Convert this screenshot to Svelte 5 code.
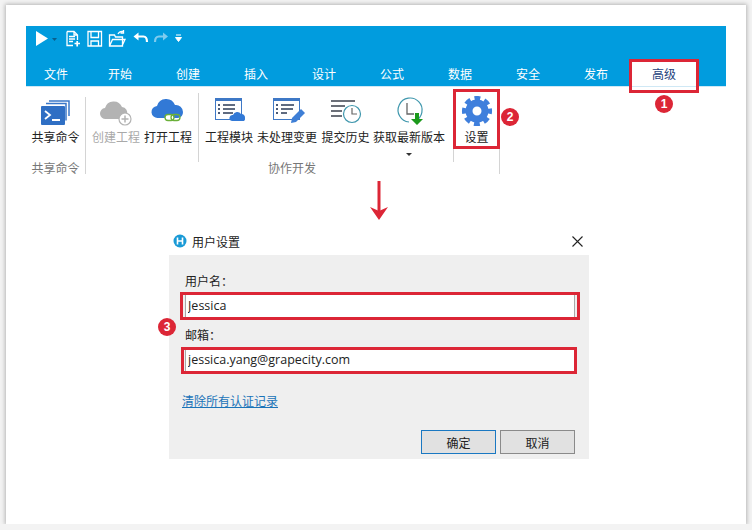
<script lang="ts">
	const tabs = ['文件', '开始', '创建', '插入', '设计', '公式', '数据', '安全', '发布', '高级'];
</script>

<div class="paper">
	<div class="ribbon">
		<div class="titlebar">
			<svg class="qa" width="150" height="20" viewBox="0 0 150 20" fill="none" stroke="#fff" stroke-width="1.300">
				<path d="M0 2 L12 9.500 L0 17Z" fill="#fff" stroke="none" />
				<path d="M16 9h5l-2.500 3z" fill="#0a5f8c" stroke="none" />
				<path d="M31 2.500h7l3.500 3.500v5M31 2.500v14h6M38 2.500v3.500h3.500" />
				<path d="M33 7.500h6M33 10h6M33 12.500h4" />
				<path d="M38.500 14.500h5.500M41.200 12v5.500" stroke-width="1.700" />
				<path d="M52 2.500h13.500v14.500h-13.500z" />
				<path d="M55 2.500v6h7.500v-6M55 17v-5h7.500v5" />
				<path d="M73.500 17v-11h5l1 2h7v9zM73.500 17l3-6.500h12.500l-3 6.500" />
				<path d="M82 5c1-2 3-3 5.500-2.500M87.500 1v3h-3" />
				<path d="M102.500 3.500l-5 4 5 4z" fill="#fff" stroke="none" />
				<path d="M101.500 7.500h6c2.500 0 3.500 2 3.500 5.500" stroke-width="2.200" />
				<path d="M127 3.500l5 4-5 4z" fill="#7fcbee" stroke="none" />
				<path d="M128 7.500h-5c-2.500 0-4 2-4 5.500" stroke="#7fcbee" stroke-width="2.200" />
				<path d="M140 6h5M139.500 8.500h6l-3 4z" fill="#fff" stroke="#fff" stroke-width="1" />
			</svg>
		</div>
		<div class="tabs">
			{#each tabs as t, i (t)}
				<div class="tab" class:first={i === 0} class:active={t === '高级'}>
					{t}
					{#if t === '高级'}<span class="mark"></span>{/if}
				</div>
			{/each}
		</div>
		<div class="body">
			<section class="group g1">
				<div class="items">
					<div class="cmd">
						<svg class="ic" width="36" height="30" viewBox="0 0 36 30">
							<path d="M12 5h20v15" fill="none" stroke="#3a78c9" stroke-width="1.500" />
							<path d="M9 7.500h20v17" fill="none" stroke="#3a78c9" stroke-width="1.500" />
							<rect x="4" y="10" width="24" height="19" rx="1" fill="#2f6fc4" />
							<path d="M8 15l5 4-5 4" fill="none" stroke="#fff" stroke-width="1.800" />
							<path d="M15 24h8" stroke="#fff" stroke-width="2" />
						</svg>
						<span>共享命令</span>
					</div>
				</div>
				<div class="glabel">共享命令</div>
			</section>
			<section class="group g2">
				<div class="items">
					<div class="cmd disabled w52">
						<svg class="ic" width="36" height="30" viewBox="0 0 36 30">
							<path d="M8 23a5.500 5.500 0 0 1-1-11 9 9 0 0 1 17-1 6 6 0 0 1 5 8 4 4 0 0 1-3 4z" fill="#b3b3b3" />
							<circle cx="27" cy="23" r="6" fill="#fff" stroke="#b3b3b3" stroke-width="1.200" />
							<path d="M23.500 23h7M27 19.500v7" stroke="#b3b3b3" stroke-width="1.500" />
						</svg>
						<span>创建工程</span>
					</div>
					<div class="cmd w52">
						<svg class="ic" width="36" height="30" viewBox="0 0 36 30">
							<path d="M8 22a6 6 0 0 1-1-12 9.500 9.500 0 0 1 18-1 7 7 0 0 1 8 7 6 6 0 0 1-5 6z" fill="#3279d6" />
							<rect x="15" y="18.500" width="9" height="6" rx="3" fill="#fff" stroke="#6bb03a" stroke-width="1.300" />
							<rect x="21" y="18.500" width="9" height="6" rx="3" fill="none" stroke="#6bb03a" stroke-width="1.300" />
						</svg>
						<span>打开工程</span>
					</div>
				</div>
			</section>
			<section class="group g3">
				<div class="items">
					<div class="cmd w52">
						<svg class="ic" width="36" height="30" viewBox="0 0 36 30">
							<rect x="4.500" y="2.500" width="26" height="21" fill="#fff" stroke="#3e78c6" />
							<rect x="4" y="2" width="27" height="3" fill="#3e78c6" />
							<path d="M7 9h2M7 13h2M7 17h2" stroke="#4a5a78" stroke-width="2" />
							<path d="M12 9h12M12 13h12M12 17h10" stroke="#5f6b80" stroke-width="2.200" />
							<path d="M21 25a3 3 0 0 1 1-6 4.500 4.500 0 0 1 8-1 3.500 3.500 0 0 1 4 4 3 3 0 0 1-1 3z" fill="#3279d6" />
						</svg>
						<span>工程模块</span>
					</div>
					<div class="cmd w64">
						<svg class="ic" width="36" height="30" viewBox="0 0 36 30">
							<rect x="4.500" y="2.500" width="26" height="21" fill="#fff" stroke="#3e78c6" />
							<rect x="4" y="2" width="27" height="3" fill="#3e78c6" />
							<path d="M7 9h2M7 13h2M7 17h2" stroke="#4a5a78" stroke-width="2" />
							<path d="M12 9h13M12 13h12M12 17h6" stroke="#5f6b80" stroke-width="2.200" />
							<path d="M22 27l1-5 9-9 4 4-9 9z" fill="#3e7fd6" />
						</svg>
						<span>未处理变更</span>
					</div>
					<div class="cmd w53">
						<svg class="ic" width="36" height="30" viewBox="0 0 36 30">
							<path d="M3 5h24M3 10h14M3 15h11M3 20h11" stroke="#6b6f78" stroke-width="2" />
							<circle cx="24" cy="18" r="8.500" fill="#fff" stroke="#3f97ad" stroke-width="1.200" />
							<path d="M24 12v6h5" fill="none" stroke="#666" stroke-width="1.200" />
						</svg>
						<span>提交历史</span>
					</div>
					<div class="cmd w74">
						<svg class="ic" width="36" height="30" viewBox="0 0 36 30">
							<path d="M24 25a12 12 0 1 0-6 1" fill="#fff" stroke="#3f97ad" stroke-width="1.200" />
							<path d="M16 7v11h7" fill="none" stroke="#666" stroke-width="1.300" />
							<path d="M24 17h4v6h4l-6 6-6-6h4z" fill="#1c9a1c" />
						</svg>
						<span>获取最新版本</span>
						<i class="caret"></i>
					</div>
				</div>
				<div class="glabel">协作开发</div>
			</section>
			<section class="group g4">
				<div class="items">
					<div class="cmd">
						<svg class="ic" width="36" height="30" viewBox="0 0 36 30">
							<circle cx="18" cy="15" r="8" fill="none" stroke="#3f7fdc" stroke-width="7" />
							<circle cx="18" cy="15" r="12.800" fill="none" stroke="#3f7fdc" stroke-width="4.500" stroke-dasharray="5.800 4.250" stroke-dashoffset="2.900" />
						</svg>
						<span>设置</span>
					</div>
				</div>
				<span class="mark"></span>
			</section>
		</div>
	</div>

	<div class="arrow">
		<svg width="20" height="40" viewBox="0 0 20 40">
			<path d="M10 0v34" stroke="#dc2636" stroke-width="3" />
			<path d="M1 26l9 13 9-13-9 4z" fill="#dc2636" />
		</svg>
	</div>

	<div class="dialog">
		<div class="dhead">
			<svg width="14" height="14" viewBox="0 0 14 14">
				<circle cx="7" cy="7" r="6.500" fill="#1a9ad6" />
				<path d="M4.500 3.500v7M9.500 3.500v7M4.500 7h5" stroke="#fff" stroke-width="1.600" />
			</svg>
			<span class="dtitle">用户设置</span>
			<svg class="close" width="11" height="11" viewBox="0 0 11 11">
				<path d="M.5.500l10 10M10.500.500l-10 10" stroke="#222" stroke-width="1.100" />
			</svg>
		</div>
		<div class="dbody">
			<label class="lbl" for="uname">用户名：</label>
			<div class="field">
				<input id="uname" value="Jessica" readonly />
				<span class="mark m1"></span>
			</div>
			<label class="lbl l2" for="umail">邮箱：</label>
			<div class="field f2">
				<input id="umail" value="jessica.yang@grapecity.com" readonly />
				<span class="mark m2"></span>
			</div>
			<a class="link" href="#top">清除所有认证记录</a>
			<div class="btns">
				<button class="primary">确定</button>
				<button>取消</button>
			</div>
		</div>
	</div>

	<span class="badge b1">1</span>
	<span class="badge b2">2</span>
	<span class="badge b3">3</span>
</div>

<style>
	:global(body) {
		background: #f3f3f3;
		font-family: "Noto Sans CJK SC", "Noto Sans", sans-serif;
		font-size: 12px;
		color: #333;
	}
	.paper {
		position: relative;
		box-sizing: border-box;
		width: 740px;
		height: 519px;
		margin: 5px 0 0 6px;
		padding: 21px 20px 0;
		background: #fff;
		box-shadow: 0 0 4px 1px rgba(0, 0, 0, 0.25);
	}
	.ribbon {
		width: 700px;
	}
	.titlebar {
		height: 36px;
		background: #019cde;
		padding: 3px 0 0 10px;
		box-sizing: border-box;
	}
	.qa {
		display: block;
	}
	.tabs {
		display: flex;
		height: 24px;
		background: #019cde;
		border-bottom: 1px solid #cfe8f5;
	}
	.tab {
		position: relative;
		width: 68px;
		text-align: center;
		line-height: 24px;
		color: #fff;
	}
	.tab.first {
		width: 60px;
	}
	.tab.active {
		background: #fff;
		color: #24417c;
	}
	.mark {
		position: absolute;
		border: 3px solid #dc2636;
		box-sizing: border-box;
		pointer-events: none;
	}
	.tab .mark {
		inset: -3px -1px -7px -1px;
	}
	.body {
		display: flex;
		height: 88px;
	}
	.group {
		position: relative;
		display: flex;
		flex-direction: column;
		border-right: 1px solid #d4d4d4;
		box-sizing: border-box;
	}
	.g1 {
		width: 60px;
		height: 77px;
		margin-top: 10px;
	}
	.g1 .items {
		margin-top: -7px;
	}
	.g2 {
		width: 113px;
		height: 69px;
		margin-top: 6px;
	}
	.g2 .items {
		margin-top: -3px;
		justify-content: flex-start;
		padding-left: 4px;
	}
	.g3 {
		width: 255px;
		height: 72px;
		margin-top: 3px;
	}
	.g3 .items {
		justify-content: flex-start;
		padding-left: 4px;
	}
	.g3 .glabel {
		padding-right: 68px;
	}
	.g4 {
		width: 46px;
		height: 84px;
		margin-top: 3px;
	}
	.g4 .mark {
		inset: -1px -1px auto -1px;
		height: 60px;
	}
	.items {
		display: flex;
		flex: none;
		justify-content: space-around;
		height: 69px;
	}
	.cmd {
		display: flex;
		flex-direction: column;
		align-items: center;
		white-space: nowrap;
		color: #222;
		padding-top: 6px;
	}
	.cmd span {
		margin-top: 2px;
		line-height: 18px;
	}
	.ic {
		display: block;
	}
	.w52 {
		width: 52px;
	}
	.w53 {
		width: 53px;
	}
	.w64 {
		width: 64px;
	}
	.w74 {
		width: 74px;
	}
	.disabled {
		color: #a9a9a9;
	}
	.caret {
		margin-top: 7px;
		border: 3px solid transparent;
		border-top-color: #333;
	}
	.glabel {
		flex: none;
		text-align: center;
		color: #777;
		line-height: 18px;
	}
	.arrow {
		display: flex;
		justify-content: center;
		width: 706px;
		height: 53px;
		padding-top: 6px;
		box-sizing: border-box;
	}
	.arrow svg {
		display: block;
	}
	.dialog {
		width: 420px;
		margin-left: 143px;
	}
	.dhead {
		display: flex;
		align-items: center;
		height: 27px;
		padding: 0 6px 1px 4px;
		box-sizing: border-box;
		background: #fff;
	}
	.dtitle {
		margin-left: 5px;
		color: #222;
	}
	.close {
		margin-left: auto;
	}
	.dbody {
		display: flex;
		flex-direction: column;
		height: 204px;
		padding: 17px 14px 0 16px;
		box-sizing: border-box;
		background: #efefef;
	}
	.lbl {
		line-height: 18px;
		color: #222;
	}
	.l2 {
		margin-top: 8px;
	}
	.field {
		position: relative;
		margin-top: 4px;
	}
	.f2 {
		margin-top: 5px;
	}
	.f2 input {
		height: 23px;
	}
	input {
		display: block;
		width: 100%;
		height: 24px;
		box-sizing: border-box;
		padding: 0 3px 2px 2px;
		border: 1px solid #a8a8a8;
		border-radius: 0;
		background: #fff;
		font-family: "Open Sans", sans-serif;
		font-size: 12.500px;
		color: #222;
		outline: none;
	}
	.m1 {
		inset: -2px -5px -2px -5px;
	}
	.m2 {
		inset: -2px -2px -2px -4px;
	}
	.link {
		margin-top: 20px;
		margin-left: -3px;
		line-height: 18px;
		color: #1a73b8;
	}
	.btns {
		display: flex;
		justify-content: flex-end;
		gap: 4px;
		margin-top: 20px;
	}
	button {
		width: 75px;
		height: 24px;
		padding: 0;
		border: 1px solid #8a8a8a;
		border-radius: 0;
		background: #e1e1e1;
		font: inherit;
		color: #222;
	}
	button.primary {
		border-color: #1a78c2;
	}
	.badge {
		position: absolute;
		width: 18px;
		height: 18px;
		border-radius: 50%;
		background: #dc2636;
		color: #fff;
		font: 700 12px/18px "Liberation Sans", sans-serif;
		text-align: center;
	}
	.b1 {
		left: 649px;
		top: 90px;
	}
	.b2 {
		left: 495px;
		top: 103px;
	}
	.b3 {
		left: 152px;
		top: 313px;
	}
</style>
